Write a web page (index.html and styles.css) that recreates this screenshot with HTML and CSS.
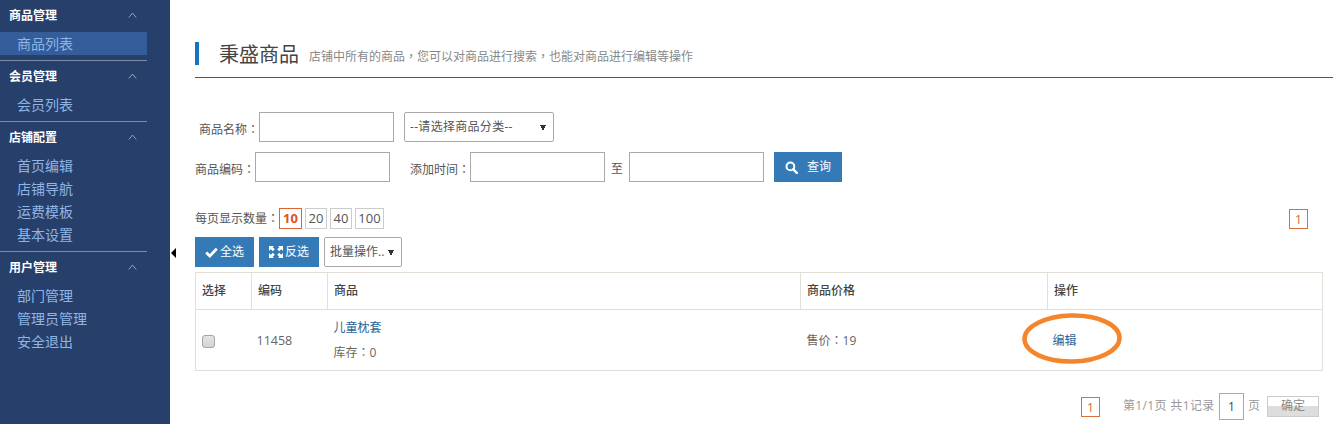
FILE: index.html
```html
<!DOCTYPE html>
<html lang="zh-CN">
<head>
<meta charset="utf-8">
<title>秉盛商品</title>
<link rel="stylesheet" href="styles.css">
</head>
<body>
<aside class="sidebar">
  <section class="group">
    <div class="group-head"><span>商品管理</span><svg class="chev" width="9" height="6" viewBox="0 0 9 6"><path d="M.8 5.500 4.500 1l3.700 4.500" fill="none" stroke="#8ea3bd"/></svg></div>
    <a class="item active">商品列表</a>
  </section>
  <section class="group">
    <div class="group-head"><span>会员管理</span><svg class="chev" width="9" height="6" viewBox="0 0 9 6"><path d="M.8 5.500 4.500 1l3.700 4.500" fill="none" stroke="#8ea3bd"/></svg></div>
    <a class="item">会员列表</a>
  </section>
  <section class="group">
    <div class="group-head"><span>店铺配置</span><svg class="chev" width="9" height="6" viewBox="0 0 9 6"><path d="M.8 5.500 4.500 1l3.700 4.500" fill="none" stroke="#8ea3bd"/></svg></div>
    <a class="item">首页编辑</a>
    <a class="item">店铺导航</a>
    <a class="item">运费模板</a>
    <a class="item">基本设置</a>
  </section>
  <section class="group last">
    <div class="group-head"><span>用户管理</span><svg class="chev" width="9" height="6" viewBox="0 0 9 6"><path d="M.8 5.500 4.500 1l3.700 4.500" fill="none" stroke="#8ea3bd"/></svg></div>
    <a class="item">部门管理</a>
    <a class="item">管理员管理</a>
    <a class="item">安全退出</a>
  </section>
</aside>
<main class="main">
  <i class="collapse"></i>
  <header class="page-head">
    <h1><span>秉盛商品</span></h1>
    <p>店铺中所有的商品<span class="punc" lang="zh-Hant">，</span>您可以对商品进行搜索<span class="punc" lang="zh-Hant">，</span>也能对商品进行编辑等操作</p>
  </header>
  <form class="search">
    <div class="row row-a">
      <label>商品名称<span class="punc" lang="zh-Hant">：</span></label><input class="field" type="text">
      <select class="cat"><option>--请选择商品分类--</option></select>
    </div>
    <div class="row">
      <label>商品编码<span class="punc" lang="zh-Hant">：</span></label><input class="field" type="text">
      <label class="time">添加时间<span class="punc" lang="zh-Hant">：</span></label><input class="field" type="text">
      <span class="to">至</span><input class="field" type="text">
      <button class="btn query" type="button"><svg width="13" height="13" viewBox="0 0 13 13"><circle cx="5.400" cy="5.400" r="3.900" fill="none" stroke="#fff" stroke-width="2"/><path d="m8.300 8.300 3.500 3.500" stroke="#fff" stroke-width="2.400" stroke-linecap="round"/></svg><span>查询</span></button>
    </div>
  </form>
  <div class="perpage">
    <span class="pp-label">每页显示数量<span class="punc" lang="zh-Hant">：</span></span>
    <a class="pp on">10</a><a class="pp w22">20</a><a class="pp w22">40</a><a class="pp w29">100</a>
    <a class="page-num top">1</a>
  </div>
  <div class="actions">
    <button class="btn all" type="button"><svg width="13" height="11" viewBox="0 0 13 11"><path d="M1.200 5.600 4.800 9 11.800 1.800" fill="none" stroke="#fff" stroke-width="2.800"/></svg><span>全选</span></button>
    <button class="btn inv" type="button"><svg width="14" height="12" viewBox="0 0 14 12" fill="#fff"><path d="M0 0h5L3.700 1.300 5.800 3.300 3.800 5.200 1.800 3.200 0 5zM14 0v5L12.200 3.200 10.200 5.200 8.200 3.300 10.300 1.300 9 0zM0 12V7l1.800 1.800 2-2 2 1.900-2.100 2L5 12zM14 12H9l1.300-1.300-2.100-2 2-1.900 2 2L14 7z"/></svg><span>反选</span></button>
    <select class="batch"><option>批量操作...</option></select>
  </div>
  <table class="goods">
    <colgroup><col class="c1"><col class="c2"><col class="c3"><col class="c4"><col></colgroup>
    <thead><tr><th>选择</th><th>编码</th><th>商品</th><th>商品价格</th><th>操作</th></tr></thead>
    <tbody><tr>
      <td><input class="check" type="checkbox"></td>
      <td class="code">11458</td>
      <td class="name"><a>儿童枕套</a><div>库存<span class="punc" lang="zh-Hant">：</span>0</div></td>
      <td class="price">售价<span class="punc" lang="zh-Hant">：</span>19</td>
      <td class="op"><a>编辑</a></td>
    </tr></tbody>
  </table>
  <svg class="circle" width="104" height="54" viewBox="0 0 104 54"><ellipse cx="52" cy="27.500" rx="47.500" ry="23" fill="none" stroke="#f5852b" stroke-width="4.500" transform="rotate(-1 52 27)"/></svg>
  <footer class="pager">
    <a class="page-num">1</a>
    <span class="info">第1/1页 共1记录</span>
    <input class="jump" type="text" value="1">
    <span class="unit">页</span>
    <button class="ok" type="button">确定</button>
  </footer>
</main>
</body>
</html>
```
FILE: styles.css
```css
* { box-sizing: border-box; }
html, body { margin: 0; height: 100%; overflow: hidden; }
body {
  display: flex;
  background: #fff;
  color: #555;
  font: 12px/1.4 "Open Sans", "Noto Sans CJK SC", sans-serif;
}
.punc { font-family: "Noto Sans CJK TC", sans-serif; }

.sidebar { width: 170px; flex: none; height: 424px; background: #27406b; }
.group { width: 147px; padding-bottom: 5px; border-bottom: 1px solid #7a8ca8; }
.group.last { border-bottom: 0; }
.group-head {
  display: flex;
  align-items: center;
  justify-content: space-between;
  height: 32px;
  padding: 0 10px 0 9px;
  color: #fff;
  font-weight: 700;
}
.chev { margin-top: -2px; }
.item {
  display: block;
  height: 23px;
  padding-left: 17px;
  color: #8fb5e6;
  font-size: 14px;
  line-height: 23px;
}
.item.active { background: #345d9a; }

.main { position: relative; flex: 1; min-width: 0; padding: 42px 4px 0 25px; }
.collapse {
  position: absolute;
  left: 1px;
  top: 248px;
  border: 5.500px solid transparent;
  border-left-width: 0;
  border-right: 5.500px solid #000;
}

.page-head {
  display: flex;
  align-items: flex-start;
  height: 36px;
  border-bottom: 1px solid #2f617f;
}
.page-head h1 {
  height: 23px;
  margin: 0;
  padding: 1px 0 0 20px;
  border-left: 4px solid #1476c0;
  color: #444;
  font-size: 20px;
  font-weight: 400;
  line-height: 23px;
}
.page-head p { margin: 6px 0 0 10px; color: #888; }

.search { margin-top: 34px; }
.row { display: flex; align-items: center; height: 30px; margin-bottom: 10px; }
.row label, .to { padding-top: 5px; white-space: nowrap; }
.row-a { padding-left: 4px; }
.field { width: 135px; height: 30px; border: 1px solid #aaa; background: #fff; }
.cat, .batch {
  appearance: none;
  height: 30px;
  padding: 0 16px 0 5px;
  border: 1px solid #aaa;
  border-radius: 2px;
  background: #fff conic-gradient(from -25deg at 50% 100%, #333 50deg, transparent 50deg) no-repeat right 7px top 12px / 6px 6px;
  color: #555;
  font: inherit;
}
.cat { width: 150px; margin-left: 10px; letter-spacing: .3px; }
.time { margin-left: 20px; }
.to { margin: 0 6px; }
.btn {
  display: inline-flex;
  align-items: center;
  justify-content: center;
  height: 30px;
  padding: 0;
  border: 0;
  background: #337ab7;
  color: #fff;
  font: inherit;
}
.btn span { padding-top: 1px; }
.query { width: 68px; margin-left: 10px; gap: 9px; }

.perpage { display: flex; align-items: center; height: 21px; margin-top: 26px; }
.pp-label { width: 84px; flex: none; white-space: nowrap; }
.pp {
  width: 23px;
  height: 21px;
  margin-right: 3px;
  border: 1px solid #ccc;
  text-align: center;
  font-size: 13px;
  line-height: 19px;
}
.pp.on { border-color: #e0642b; color: #e0531c; font-weight: 700; }
.pp.w22 { width: 22px; }
.pp.w29 { width: 29px; }
.page-num {
  width: 19px;
  height: 20px;
  border: 1px solid #d9703a;
  color: #d9703a;
  text-align: center;
  font-size: 13px;
  line-height: 18px;
}
.page-num.top { margin-left: auto; margin-right: 25px; }

.actions { display: flex; height: 30px; margin-top: 8px; }
.all { width: 59px; gap: 2px; }
.inv { width: 60px; margin-left: 5px; gap: 2px; }
.batch { width: 78px; margin-left: 5px; }

.goods {
  width: 1128px;
  margin-top: 5px;
  border-collapse: collapse;
  table-layout: fixed;
}
.c1 { width: 56px; }
.c2 { width: 76px; }
.c3 { width: 473px; }
.c4 { width: 247px; }
.goods th, .goods td { padding: 0 6px; border: 1px solid #e2dfd8; text-align: left; font-weight: 400; }
.goods th { height: 37px; color: #444; font-weight: 500; }
.goods td { height: 61px; padding-top: 2px; border-left: 0; border-right: 0; color: #666; }
.goods td:first-child { border-left: 1px solid #e2dfd8; }
.goods td:last-child { border-right: 1px solid #e2dfd8; padding-left: 5px; }
.goods .code { padding-left: 5px; font-size: 12.500px; }
.name a { display: block; color: #2a6496; }
.name div { margin-top: 7px; }
.op a { color: #2a6496; }
.check {
  appearance: none;
  display: block;
  width: 13px;
  height: 13px;
  margin: 0;
  border: 1px solid #a5a5a5;
  border-radius: 3px;
  background: linear-gradient(#e4e4e4, #d4d4d4);
}

.circle { position: absolute; left: 850px; top: 311px; }

.pager { display: flex; align-items: center; height: 27px; margin-top: 22px; padding-right: 14px; justify-content: flex-end; }
.pager .page-num { margin-right: 23px; }
.info { width: 96px; color: #999; letter-spacing: .35px; white-space: nowrap; }
.jump { width: 25px; height: 27px; padding: 0; border: 1px solid #aaa; color: #444; text-align: center; font: inherit; }
.unit { width: 23px; padding-left: 4px; color: #999; }
.ok {
  width: 52px;
  height: 21px;
  padding: 0;
  border: 1px solid #ccc;
  background: linear-gradient(#fff 45%, #ddd 45%);
  color: #888;
  font: inherit;
}
```
